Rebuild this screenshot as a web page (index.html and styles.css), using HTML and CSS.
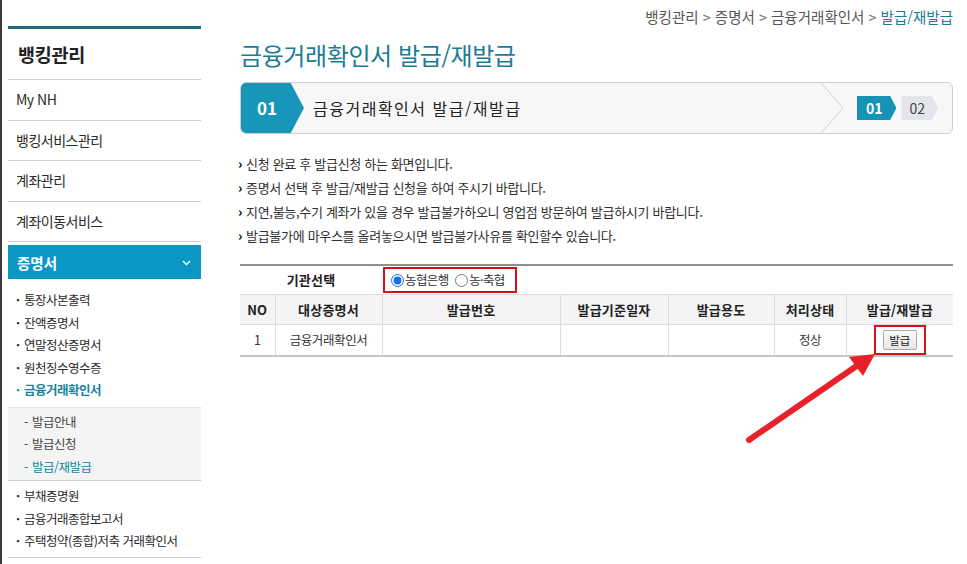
FILE: index.html
```html
<!DOCTYPE html>
<html lang="ko">
<head>
<meta charset="utf-8">
<title>금융거래확인서 발급/재발급</title>
<link rel="stylesheet" href="styles.css">
</head>
<body>
<div class="page">
  <aside class="lnb">
    <h2 class="lnb-title">뱅킹관리</h2>
    <ul class="menu">
      <li class="menu-item"><a class="menu-link">My NH</a></li>
      <li class="menu-item"><a class="menu-link">뱅킹서비스관리</a></li>
      <li class="menu-item"><a class="menu-link">계좌관리</a></li>
      <li class="menu-item"><a class="menu-link">계좌이동서비스</a></li>
      <li class="menu-item open">
        <a class="menu-active">증명서
          <svg class="chev" width="9" height="6" viewBox="0 0 9 6"><polyline points="1,1 4.5,4.5 8,1" fill="none" stroke="#fff" stroke-width="1.4"/></svg>
        </a>
        <ul class="sub">
          <li class="sub-item">통장사본출력</li>
          <li class="sub-item">잔액증명서</li>
          <li class="sub-item">연말정산증명서</li>
          <li class="sub-item">원천징수영수증</li>
          <li class="sub-item current">금융거래확인서</li>
        </ul>
        <ul class="sub2">
          <li class="sub2-item">발급안내</li>
          <li class="sub2-item">발급신청</li>
          <li class="sub2-item current">발급/재발급</li>
        </ul>
        <ul class="sub sub-last">
          <li class="sub-item">부채증명원</li>
          <li class="sub-item">금융거래종합보고서</li>
          <li class="sub-item">주택청약(종합)저축 거래확인서</li>
        </ul>
      </li>
    </ul>
  </aside>

  <main class="content">
    <div class="breadcrumb">뱅킹관리 <span class="sep">&gt;</span> 증명서 <span class="sep">&gt;</span> 금융거래확인서 <span class="sep">&gt;</span> <span class="here">발급/재발급</span></div>
    <h1 class="page-title">금융거래확인서 발급/재발급</h1>

    <div class="step-bar">
      <div class="step-num">01</div>
      <div class="step-text">금융거래확인서 발급/재발급</div>
      <div class="step-side">
        <svg class="step-sep" width="25" height="50" viewBox="0 0 25 50"><polyline points="0,0 22,25 0,50" fill="none" stroke="#d2d2d2" stroke-width="1"/></svg>
        <span class="badge on">01</span>
        <span class="badge">02</span>
      </div>
    </div>

    <ul class="notice">
      <li><span class="arr">›</span>신청 완료 후 발급신청 하는 화면입니다.</li>
      <li><span class="arr">›</span>증명서 선택 후 발급/재발급 신청을 하여 주시기 바랍니다.</li>
      <li><span class="arr">›</span>지연,불능,수기 계좌가 있을 경우 발급불가하오니 영업점 방문하여 발급하시기 바랍니다.</li>
      <li><span class="arr">›</span>발급불가에 마우스를 올려놓으시면 발급불가사유를 확인할수 있습니다.</li>
    </ul>

    <table class="cert-table">
      <colgroup>
        <col class="c-no"><col class="c-name"><col class="c-num"><col class="c-date"><col class="c-use"><col class="c-state"><col class="c-act">
      </colgroup>
      <tr class="org-row">
        <th colspan="2">기관선택</th>
        <td colspan="5" class="org-cell">
          <span class="mark org-mark">
            <label class="opt"><input type="radio" name="org" checked>농협은행</label>
            <label class="opt"><input type="radio" name="org">농·축협</label>
          </span>
        </td>
      </tr>
      <tr class="head-row">
        <th>NO</th><th>대상증명서</th><th>발급번호</th><th>발급기준일자</th><th>발급용도</th><th>처리상태</th><th>발급/재발급</th>
      </tr>
      <tr class="body-row">
        <td>1</td><td>금융거래확인서</td><td></td><td></td><td></td><td>정상</td>
        <td><span class="mark btn-mark"><button class="btn" type="button">발급</button></span></td>
      </tr>
    </table>
  </main>

  <svg class="annot-arrow" width="967" height="564" viewBox="0 0 967 564">
    <line x1="749" y1="440" x2="858" y2="365" stroke="#e8202a" stroke-width="6" stroke-linecap="round"/>
    <polygon points="875,354 863,376 849,357" fill="#e8202a"/>
  </svg>
</div>
</body>
</html>
```

FILE: styles.css
```css
* { box-sizing: border-box; }
html, body { margin: 0; padding: 0; background: #fff; }
body {
  font-family: "Noto Sans CJK KR", "Noto Sans", sans-serif;
  color: #333;
}
ul { list-style: none; margin: 0; padding: 0; }

.page {
  position: relative;
  display: flex;
  width: 967px;
  height: 564px;
  overflow: hidden;
  border-left: 2px solid #3a3a3a;
}

/* ---------- left navigation ---------- */
.lnb {
  width: 193px;
  margin-left: 6px;
  padding-top: 26px;
  flex: none;
}
.lnb-title {
  margin: 0;
  height: 54px;
  line-height: 51px;
  padding-left: 10px;
  border-top: 3px solid #1e6d7e;
  border-bottom: 1px solid #d0d0d0;
  font-size: 18.5px;
  font-weight: 700;
  color: #222;
  letter-spacing: -0.3px;
}
.menu-link {
  display: block;
  height: 40.5px;
  line-height: 39px;
  padding-left: 8px;
  border-bottom: 1px solid #d0d0d0;
  font-size: 14px;
  color: #2a2a2a;
  letter-spacing: -0.5px;
}
.menu-active {
  display: flex;
  align-items: center;
  justify-content: space-between;
  height: 34px;
  margin-top: 3px;
  padding: 0 10px 0 9px;
  background: #0b97c6;
  color: #fff;
  font-size: 14.5px;
  font-weight: 700;
}
.chev { margin-top: 1px; }
.sub { padding: 10px 0 5px; }
.sub-item {
  height: 22.5px;
  line-height: 22.5px;
  padding-left: 8px;
  font-size: 12.5px;
  letter-spacing: -0.5px;
  color: #2a2a2a;
}
.sub-item::before {
  content: "·";
  display: inline-block;
  width: 8px;
  font-weight: 700;
}
.sub-item.current { color: #17829d; font-weight: 700; }
.sub2 {
  background: #f4f4f4;
  border-top: 1px solid #e2e2e2;
  border-bottom: 1px solid #cfcfcf;
  padding: 3px 0 2px;
}
.sub2-item {
  height: 22.5px;
  line-height: 22.5px;
  padding-left: 16px;
  font-size: 12.5px;
  letter-spacing: -0.5px;
  color: #444;
}
.sub2-item::before {
  content: "-";
  display: inline-block;
  width: 8px;
}
.sub2-item.current { color: #17829d; }
.sub-last {
  padding: 4px 0 4px;
  border-bottom: 1px solid #d0d0d0;
}

/* ---------- content ---------- */
.content {
  width: 713px;
  margin-left: 39px;
  flex: none;
}
.breadcrumb {
  height: 34px;
  line-height: 34px;
  text-align: right;
  font-size: 14.5px;
  color: #555;
}
.breadcrumb .sep { color: #777; }
.breadcrumb .here { color: #1a7d96; }

.page-title {
  margin: 3px 0 9px;
  height: 36px;
  line-height: 36px;
  font-size: 24px;
  font-weight: 400;
  color: #1b7c97;
  letter-spacing: -0.4px;
}

.step-bar {
  display: flex;
  align-items: center;
  height: 52px;
  border: 1px solid #cfcfcf;
  border-radius: 6px;
  background: #f7f7f7;
  overflow: hidden;
}
.step-num {
  width: 63px;
  height: 50px;
  flex: none;
  padding-left: 16px;
  line-height: 50px;
  background: #1796b9;
  color: #fff;
  font-size: 17px;
  font-weight: 700;
  clip-path: polygon(0 0, 79% 0, 100% 50%, 79% 100%, 0 100%);
}
.step-text {
  margin-left: 9px;
  font-size: 16px;
  letter-spacing: 1.5px;
  color: #222;
}
.step-side {
  margin-left: auto;
  display: flex;
  align-items: center;
  height: 50px;
  padding-right: 14px;
}
.step-sep { margin-right: 11px; display: block; }
.badge {
  display: inline-block;
  height: 24px;
  line-height: 24px;
  padding: 0 13px 0 8px;
  font-size: 14px;
  color: #444;
  background: #e3e5ea;
  clip-path: polygon(0 0, 84% 0, 100% 50%, 84% 100%, 0 100%);
}
.badge.on {
  background: #1592b4;
  color: #fff;
  font-weight: 700;
  margin-right: 5px;
  padding: 0 14px 0 9px;
}

.notice { margin-top: 18px; }
.notice li {
  height: 24px;
  line-height: 24px;
  font-size: 13px;
  color: #2f2f2f;
  letter-spacing: -0.3px;
  margin-left: -2px;
}
.notice .arr {
  display: inline-block;
  width: 8px;
  font-weight: 900;
  font-size: 13px;
  color: #111;
}

.cert-table {
  width: 713px;
  margin-top: 16px;
  border-collapse: collapse;
  table-layout: fixed;
  border-top: 2px solid #8f8f8f;
  border-bottom: 2px solid #c6c6c6;
  font-size: 12.5px;
}
.c-no { width: 35px; }
.c-name { width: 107px; }
.c-num { width: 178px; }
.c-date { width: 108px; }
.c-use { width: 106px; }
.c-state { width: 72px; }
.c-act { width: 107px; }

.cert-table th, .cert-table td {
  padding: 0;
  text-align: center;
  vertical-align: middle;
}
.org-row { height: 29px; }
.org-row th {
  font-size: 13px;
  font-weight: 700;
  color: #222;
  letter-spacing: 0.2px;
}
.org-cell { text-align: left !important; padding-left: 1px !important; }

.head-row { height: 30px; background: #f4f4f4; }
.head-row th {
  border-top: 1px solid #dcdcdc;
  border-left: 1px solid #dcdcdc;
  font-size: 13px;
  font-weight: 700;
  color: #222;
  letter-spacing: 0.2px;
}
.head-row th:first-child { border-left: none; }
.body-row { height: 31px; }
.body-row td {
  border-top: 1px solid #dcdcdc;
  border-left: 1px solid #dcdcdc;
  color: #333;
  letter-spacing: -0.4px;
}
.body-row td:first-child { border-left: none; }

.mark { display: inline-block; border: 2px solid #d0121c; }
.org-mark {
  height: 26px;
  width: 134px;
  padding-left: 6px;
  line-height: 22px;
  vertical-align: middle;
}
.opt {
  font-size: 12.5px;
  letter-spacing: -0.6px;
  color: #333;
}
.opt input {
  margin: 0 1px 0 0;
  width: 13px;
  height: 13px;
  vertical-align: -2px;
  accent-color: #1a6fe0;
}
.opt + .opt { margin-left: 3px; }
.btn-mark { padding: 3px 7px; vertical-align: middle; }
.btn {
  display: block;
  width: 34px;
  height: 20px;
  padding: 0;
  border: 1px solid #a9a9a9;
  border-radius: 2px;
  background: linear-gradient(#fbfbfb, #e6e6e6);
  font-family: "Noto Sans CJK KR", sans-serif;
  font-size: 11.5px;
  color: #222;
  line-height: 18px;
}

.annot-arrow {
  position: absolute;
  left: -2px;
  top: 0;
  pointer-events: none;
}
```
